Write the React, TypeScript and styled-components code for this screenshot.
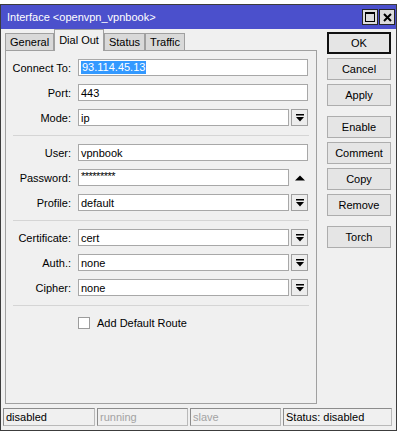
import React from "react";
import styled, { createGlobalStyle } from "styled-components";

const Global = createGlobalStyle`
  html, body { margin: 0; padding: 0; background: #ffffff; }
  body { font-family: "Liberation Sans", Arial, sans-serif; font-size: 11px; color: #000; }
`;

const Window = styled.div`
  margin-top: 4px;
  width: 397px;
  height: 427px;
  box-sizing: border-box;
  border: 1px solid #3c3c3c;
  background: #f0f0f0;
  display: flex;
  flex-direction: column;
`;

const TitleBar = styled.div`
  height: 24px;
  flex: none;
  background: #4b50cc;
  color: #fff;
  display: flex;
  align-items: center;
  justify-content: space-between;
  padding: 0 1px 0 6px;
`;

const TitleText = styled.span`
  font-size: 11px;
  white-space: nowrap;
`;

const TitleButtons = styled.div`
  display: flex;
  gap: 1px;
`;

const TitleButton = styled.div`
  width: 16px;
  height: 16px;
  box-sizing: border-box;
  border: 1px solid #262626;
  background: #dcdcdc;
  display: flex;
  align-items: center;
  justify-content: center;
`;

const Main = styled.div`
  height: 376px;
  flex: none;
  display: flex;
  padding-left: 4px;
`;

const LeftColumn = styled.div`
  width: 312px;
  height: 375px;
  display: flex;
  flex-direction: column;
`;

const TabRow = styled.div`
  height: 21px;
  flex: none;
  display: flex;
  align-items: flex-end;
`;

const Tab = styled.div<{ $active?: boolean }>`
  box-sizing: border-box;
  height: ${(p) => (p.$active ? "22px" : "17px")};
  margin-bottom: ${(p) => (p.$active ? "-1px" : "0")};
  position: relative;
  z-index: ${(p) => (p.$active ? 1 : 0)};
  padding: ${(p) => (p.$active ? "3px 4px 0" : "1px 4px 0")};
  border: 1px solid #a0a0a0;
  border-bottom: none;
  background: ${(p) => (p.$active ? "#f0f0f0" : "#d9d9d9")};
  white-space: nowrap;
  font-size: 11px;
  line-height: 14px;
`;

const Panel = styled.div`
  flex: 1;
  box-sizing: border-box;
  border: 1px solid #a0a0a0;
  padding: 8px 7px 0 0;
  display: flex;
  flex-direction: column;
  gap: 8px;
`;

const Row = styled.div`
  display: grid;
  grid-template-columns: 65px 230px;
  column-gap: 7px;
  height: 17px;
  align-items: center;
`;

const Label = styled.span`
  text-align: right;
  white-space: nowrap;
`;

const Field = styled.div`
  display: flex;
  gap: 2px;
  height: 17px;
`;

const Input = styled.div`
  flex: 1;
  box-sizing: border-box;
  height: 17px;
  border: 1px solid #a8a8a8;
  background: #fff;
  padding-left: 2px;
  display: flex;
  align-items: center;
  white-space: nowrap;
  overflow: hidden;
`;

const Selected = styled.span`
  background: #3399ff;
  color: #fff;
  line-height: 13px;
  padding: 0 1px;
`;

const Masked = styled.span`
  letter-spacing: -0.5px;
  position: relative;
  top: -2px;
  font-size: 11px;
`;

const DropButton = styled.div`
  width: 17px;
  height: 17px;
  box-sizing: border-box;
  border: 1px solid #a0a0a0;
  background: #ededed;
  display: flex;
  align-items: center;
  justify-content: center;
`;

const Reveal = styled.div`
  width: 17px;
  height: 17px;
  display: flex;
  align-items: center;
  justify-content: center;
`;

const Separator = styled.div`
  height: 1px;
  margin: 1px 0 0 7px;
  background: #d5d5d5;
`;

const CheckWrap = styled.div`
  display: flex;
  align-items: center;
  gap: 7px;
`;

const CheckBox = styled.div`
  width: 12px;
  height: 12px;
  box-sizing: border-box;
  border: 1px solid #9c9c9c;
  background: #fff;
`;

const RightColumn = styled.div`
  width: 64px;
  margin-left: 10px;
  padding-top: 3px;
  display: flex;
  flex-direction: column;
  gap: 10px;
`;

const ButtonGroup = styled.div`
  display: flex;
  flex-direction: column;
  gap: 4px;
`;

const Button = styled.div<{ $default?: boolean }>`
  height: 22px;
  box-sizing: border-box;
  border: 1px solid ${(p) => (p.$default ? "#111" : "#adadad")};
  box-shadow: ${(p) => (p.$default ? "inset 0 0 0 1px #111" : "none")};
  background: #e5e5e5;
  display: flex;
  align-items: center;
  justify-content: center;
  font-size: 11px;
`;

const StatusBar = styled.div`
  flex: none;
  display: grid;
  grid-template-columns: 92px 91px 91px 109px;
  column-gap: 2px;
  padding: 3px 0 0 2px;
`;

const StatusCell = styled.div<{ $dim?: boolean }>`
  height: 18px;
  box-sizing: border-box;
  border: 1px solid #b9b9b9;
  border-top-color: #8c8c8c;
  border-left-color: #8c8c8c;
  padding-left: 2px;
  display: flex;
  align-items: center;
  color: ${(p) => (p.$dim ? "#a3a3a3" : "#000")};
  white-space: nowrap;
`;

const DropIcon = () => (
  <svg width="8" height="8" viewBox="0 0 8 8">
    <rect x="0" y="0" width="8" height="1.5" fill="#000" />
    <polygon points="0,3 8,3 4,7.5" fill="#000" />
  </svg>
);

const UpIcon = () => (
  <svg width="10" height="6" viewBox="0 0 10 6">
    <polygon points="0,5.5 10,5.5 5,0.5" fill="#000" />
  </svg>
);

const MaxIcon = () => (
  <svg width="10" height="10" viewBox="0 0 10 10">
    <rect x="0.5" y="0.5" width="9" height="9" fill="none" stroke="#000" strokeWidth="1" />
    <rect x="0" y="0" width="10" height="2" fill="#000" />
  </svg>
);

const CloseIcon = () => (
  <svg width="9" height="9" viewBox="0 0 9 9">
    <path d="M1 1 L8 8 M8 1 L1 8" stroke="#000" strokeWidth="2" />
  </svg>
);

type FieldDef = { label: string; value: React.ReactNode; kind?: "text" | "drop" | "secret" };

const FormRow = ({ label, value, kind = "text" }: FieldDef) => (
  <Row>
    <Label>{label}</Label>
    <Field>
      <Input>{value}</Input>
      {kind === "drop" && (
        <DropButton>
          <DropIcon />
        </DropButton>
      )}
      {kind === "secret" && (
        <Reveal>
          <UpIcon />
        </Reveal>
      )}
    </Field>
  </Row>
);

export default function App() {
  return (
    <>
      <Global />
      <Window>
        <TitleBar>
          <TitleText>Interface &lt;openvpn_vpnbook&gt;</TitleText>
          <TitleButtons>
            <TitleButton>
              <MaxIcon />
            </TitleButton>
            <TitleButton>
              <CloseIcon />
            </TitleButton>
          </TitleButtons>
        </TitleBar>
        <Main>
          <LeftColumn>
            <TabRow>
              <Tab>General</Tab>
              <Tab $active>Dial Out</Tab>
              <Tab>Status</Tab>
              <Tab>Traffic</Tab>
            </TabRow>
            <Panel>
              <FormRow label="Connect To:" value={<Selected>93.114.45.13</Selected>} />
              <FormRow label="Port:" value="443" />
              <FormRow label="Mode:" value="ip" kind="drop" />
              <Separator />
              <FormRow label="User:" value="vpnbook" />
              <FormRow label="Password:" value={<Masked>*********</Masked>} kind="secret" />
              <FormRow label="Profile:" value="default" kind="drop" />
              <Separator />
              <FormRow label="Certificate:" value="cert" kind="drop" />
              <FormRow label="Auth.:" value="none" kind="drop" />
              <FormRow label="Cipher:" value="none" kind="drop" />
              <Separator />
              <Row>
                <span />
                <CheckWrap>
                  <CheckBox />
                  <span>Add Default Route</span>
                </CheckWrap>
              </Row>
            </Panel>
          </LeftColumn>
          <RightColumn>
            <ButtonGroup>
              <Button $default>OK</Button>
              <Button>Cancel</Button>
              <Button>Apply</Button>
            </ButtonGroup>
            <ButtonGroup>
              <Button>Enable</Button>
              <Button>Comment</Button>
              <Button>Copy</Button>
              <Button>Remove</Button>
            </ButtonGroup>
            <ButtonGroup>
              <Button>Torch</Button>
            </ButtonGroup>
          </RightColumn>
        </Main>
        <StatusBar>
          <StatusCell>disabled</StatusCell>
          <StatusCell $dim>running</StatusCell>
          <StatusCell $dim>slave</StatusCell>
          <StatusCell>Status: disabled</StatusCell>
        </StatusBar>
      </Window>
    </>
  );
}
